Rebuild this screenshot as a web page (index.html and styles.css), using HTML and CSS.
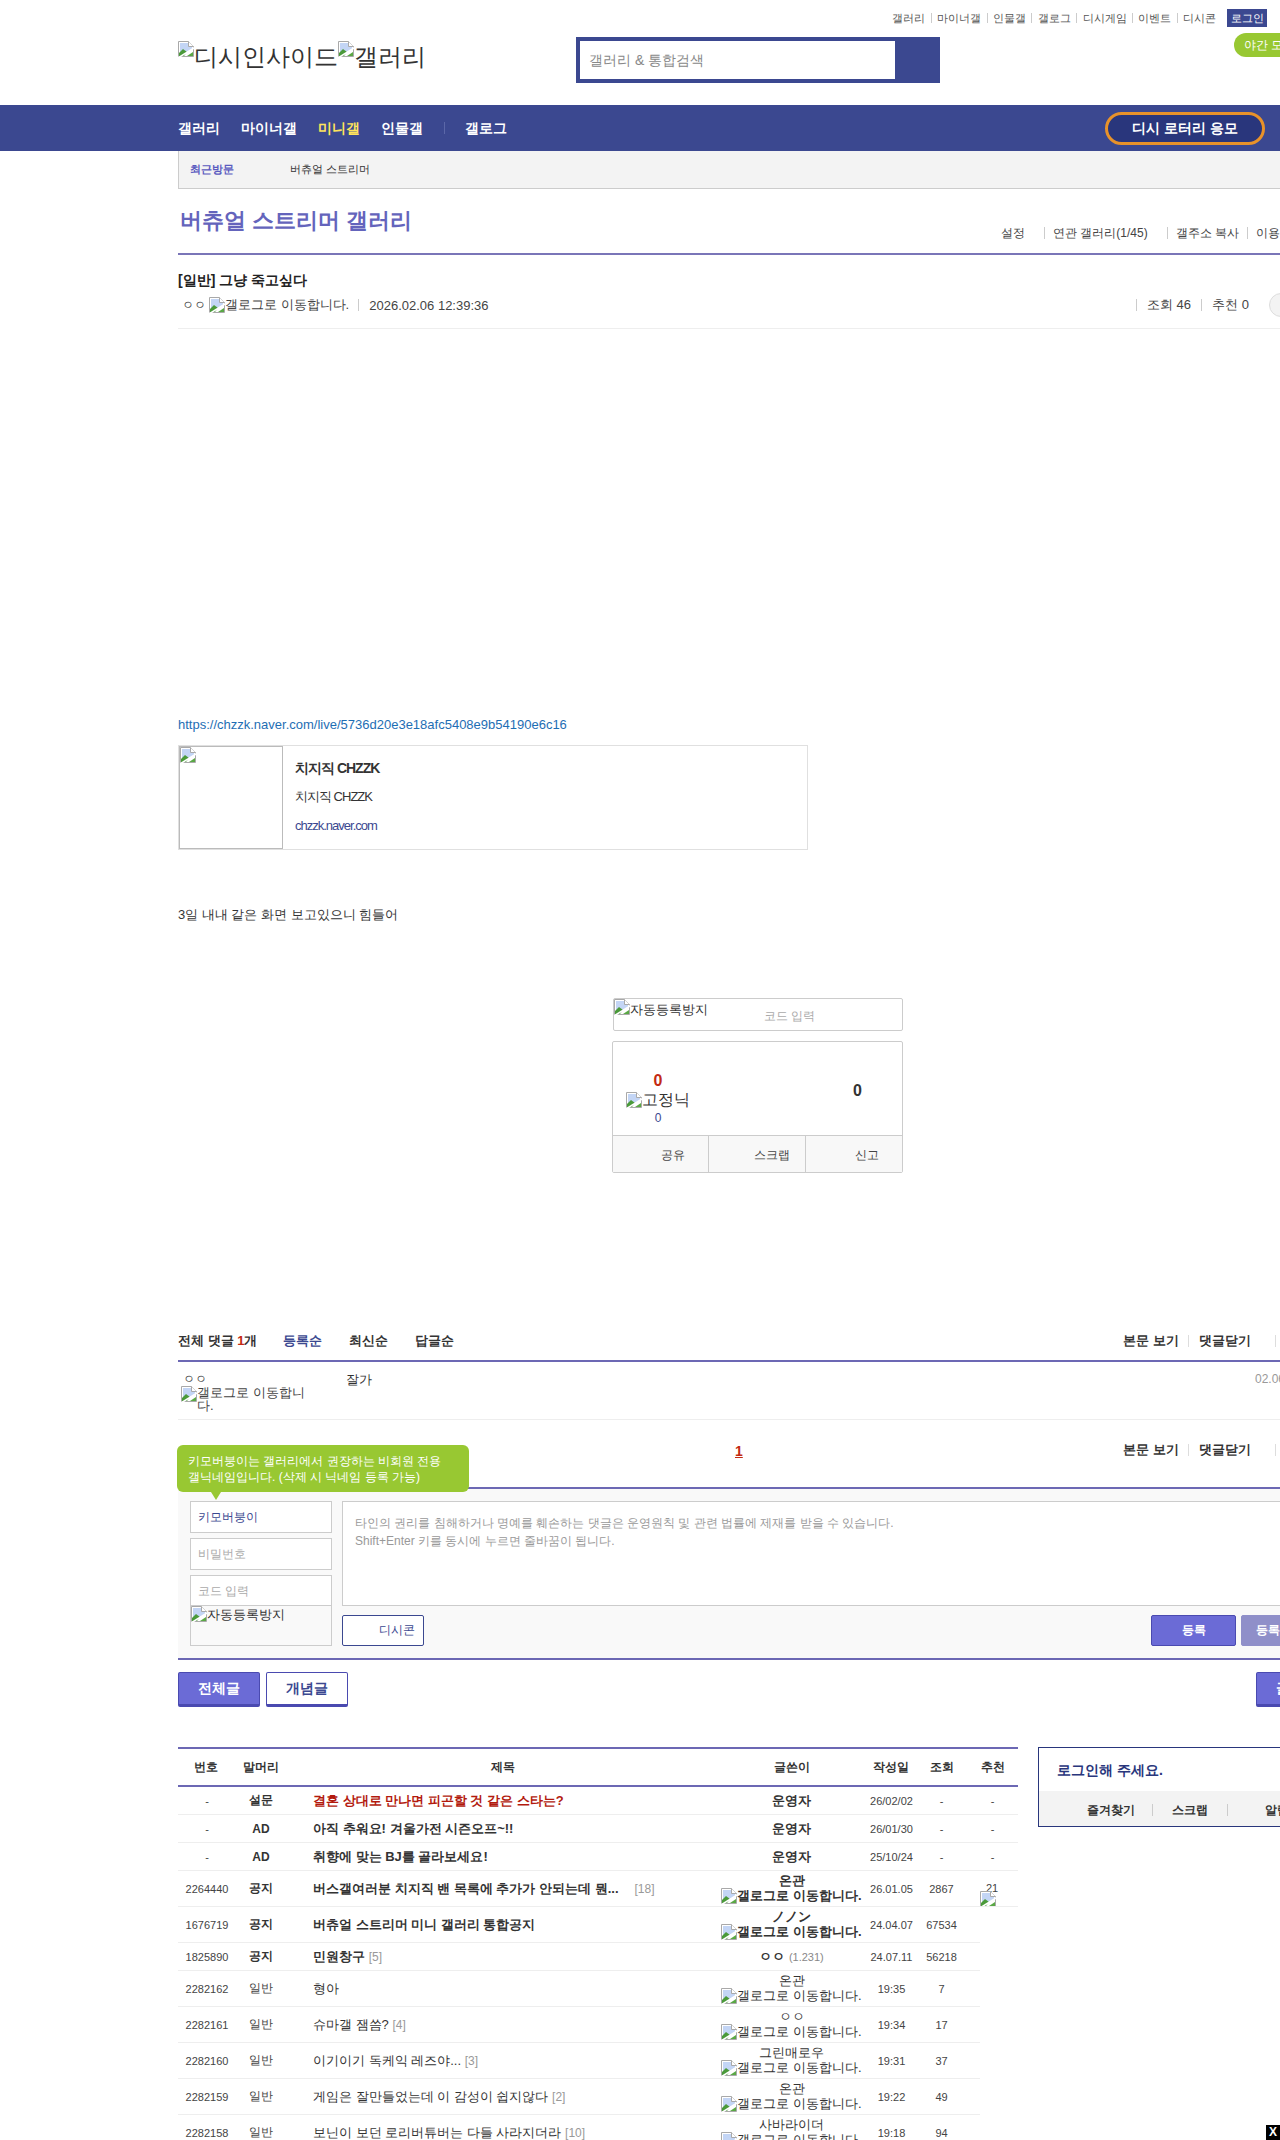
FILE: index.html
```html
<!DOCTYPE html>
<html lang="ko">
<head>
<meta charset="utf-8">
<title>버츄얼 스트리머 갤러리</title>
<link rel="stylesheet" href="styles.css">
</head>
<body>
<svg class="defs" width="0" height="0" aria-hidden="true">
  <symbol id="broken" viewBox="0 0 16 16">
    <path d="M.5.5h10l5 5v10H.5z" fill="#fff" stroke="#a9a9a9"/>
    <path d="M2 2h8l4 4v3L2 13z" fill="#c3d5f5"/>
    <path d="M10.5.5v5h5" fill="#fff" stroke="#a9a9a9"/>
    <path d="M1 15v-3l4-4 4 3-3 4z" fill="#4a9a3a"/>
    <path d="M9 15l6-4v4z" fill="#5aa845"/>
    <path d="M0 16L16 6v2L3 16z" fill="#fff"/>
  </symbol>
</svg>
<div class="page">
  <div class="topbar">
    <div class="toplinks">
      <a>갤러리</a><a>마이너갤</a><a>인물갤</a><a>갤로그</a><a>디시게임</a><a>이벤트</a><a>디시콘</a>
    </div>
    <span class="login">로그인</span>
  </div>
  <div class="header">
    <div class="logo"><svg class="bi"><use href="#broken"/></svg>디시인사이드<svg class="bi"><use href="#broken"/></svg>갤러리</div>
    <div class="search"><div class="search-input">갤러리 &amp; 통합검색</div></div>
    <div class="night">야간 모드</div>
  </div>
</div>
<nav class="gnb">
  <div class="page gnb-in">
    <a>갤러리</a><a>마이너갤</a><a class="on">미니갤</a><a>인물갤</a><i class="gnb-sep"></i><a>갤로그</a>
    <span class="lotto">디시 로터리 응모</span>
  </div>
</nav>
<div class="page">
  <div class="recent"><b>최근방문</b><span>버츄얼 스트리머</span></div>
  <div class="gall-head">
    <h2>버츄얼 스트리머 갤러리</h2>
    <div class="gall-links"><a class="l1">설정</a><i class="vs"></i><a class="l2">연관 갤러리(1/45)</a><i class="vs"></i><a class="l3">갤주소 복사</a><i class="vs"></i><a class="l4">이용 안내</a></div>
  </div>

  <div class="post-head">
    <h3>[일반] 그냥 죽고싶다</h3>
    <div class="post-meta">
      <span class="nick">ㅇㅇ</span><svg class="bi"><use href="#broken"/></svg><span class="alt">갤로그로 이동합니다.</span><i class="vs"></i><span class="date">2026.02.06 12:39:36</span>
      <div class="post-count"><i class="vs"></i><span class="pc1">조회 46</span><i class="vs"></i><span class="pc2">추천 0</span><span class="roundbtn"></span></div>
    </div>
  </div>

  <div class="post-body">
    <a class="post-link">https://chzzk.naver.com/live/5736d20e3e18afc5408e9b54190e6c16</a>
    <div class="og">
      <div class="og-img"><svg class="bi"><use href="#broken"/></svg></div>
      <div class="og-txt">
        <b>치지직 CHZZK</b>
        <span>치지직 CHZZK</span>
        <a>chzzk.naver.com</a>
      </div>
    </div>
    <p class="post-text">3일 내내 같은 화면 보고있으니 힘들어</p>
    <div class="captcha"><svg class="bi"><use href="#broken"/></svg><span class="cap-alt">자동등록방지</span><span class="cap-ph">코드 입력</span></div>
    <div class="rec">
      <div class="rec-top">
        <div class="rec-up"><b>0</b><div class="fix"><svg class="bi"><use href="#broken"/></svg>고정닉</div><em>0</em></div>
        <div class="rec-down">0</div>
      </div>
      <div class="rec-bot"><span class="rb1">공유</span><span class="rb2">스크랩</span><span class="rb3">신고</span></div>
    </div>
  </div>

  <div class="cmt-head">
    <div class="cmt-sort"><b>전체 댓글 <em>1</em>개</b><a class="on">등록순</a><a>최신순</a><a>답글순</a></div>
    <div class="cmt-opts"><a>본문 보기</a><i class="vs"></i><a>댓글닫기</a><i class="vs far"></i><a class="refresh">새로고침</a></div>
  </div>
  <div class="cmt-row">
    <div class="cmt-who"><span class="nick">ㅇㅇ</span><div class="cmt-alt"><svg class="bi"><use href="#broken"/></svg><span>갤로그로 이동합니다.</span></div></div>
    <div class="cmt-txt">잘가</div>
    <div class="cmt-date">02.06 12:45:01</div>
  </div>
  <div class="cmt-foot">
    <a class="pg">1</a>
    <div class="cmt-opts"><a>본문 보기</a><i class="vs"></i><a>댓글닫기</a><i class="vs far"></i><a class="refresh">새로고침</a></div>
    <div class="tip">키모버붕이는 갤러리에서 권장하는 비회원 전용<br>갤닉네임입니다. (삭제 시 닉네임 등록 가능)</div>
  </div>
  <div class="form">
    <div class="form-left">
      <div class="inp dark">키모버붕이</div>
      <div class="inp">비밀번호</div>
      <div class="inp-cap"><div class="inp-cap-ph">코드 입력</div><div class="inp-cap-img"><svg class="bi"><use href="#broken"/></svg>자동등록방지</div></div>
    </div>
    <div class="form-right">
      <div class="ta">타인의 권리를 침해하거나 명예를 훼손하는 댓글은 운영원칙 및 관련 법률에 제재를 받을 수 있습니다.<br>Shift+Enter 키를 동시에 누르면 줄바꿈이 됩니다.</div>
      <div class="form-btns"><span class="dccon">디시콘</span><span class="submit">등록</span><span class="submit alt2">등록+추천</span></div>
    </div>
  </div>
  <div class="tabs"><a class="tab on">전체글</a><a class="tab">개념글</a><a class="tab on write">글쓰기</a></div>

  <div class="list-wrap">
    <table class="list">
      <colgroup><col class="c1"><col class="c2"><col class="c3"><col class="c4"><col class="c5"><col class="c6"><col class="c7"></colgroup>
      <thead><tr><th>번호</th><th>말머리</th><th>제목</th><th>글쓴이</th><th>작성일</th><th class="pr">조회</th><th class="pr">추천</th></tr></thead>
      <tbody>
        <tr class="strong"><td class="num">-</td><td>설문</td><td class="t red">결혼 상대로 만나면 피곤할 것 같은 스타는?</td><td class="w">운영자</td><td class="d">26/02/02</td><td class="pr n">-</td><td class="pr n">-</td></tr>
        <tr class="strong"><td class="num">-</td><td>AD</td><td class="t">아직 추워요! 겨울가전 시즌오프~!!</td><td class="w">운영자</td><td class="d">26/01/30</td><td class="pr n">-</td><td class="pr n">-</td></tr>
        <tr class="strong"><td class="num">-</td><td>AD</td><td class="t">취향에 맞는 BJ를 골라보세요!</td><td class="w">운영자</td><td class="d">25/10/24</td><td class="pr n">-</td><td class="pr n">-</td></tr>
        <tr class="strong tall"><td class="num">2264440</td><td>공지</td><td class="t"><span class="cut">버스갤여러분 치지직 밴 목록에 추가가 안되는데 뭔...</span><span class="rp far">[18]</span></td><td class="w"><div>온관</div><div class="walt"><svg class="bi"><use href="#broken"/></svg>갤로그로 이동합니다.</div></td><td class="d">26.01.05</td><td class="pr n">2867</td><td class="pr n rcell"><span class="r21">21</span><svg class="bi r-ico"><use href="#broken"/></svg></td></tr>
        <tr class="strong tall"><td class="num">1676719</td><td>공지</td><td class="t">버츄얼 스트리머 미니 갤러리 통합공지</td><td class="w"><div>ノノン</div><div class="walt"><svg class="bi"><use href="#broken"/></svg>갤로그로 이동합니다.</div></td><td class="d">24.04.07</td><td class="pr n">67534</td></tr>
        <tr class="strong"><td class="num">1825890</td><td>공지</td><td class="t">민원창구 <span class="rp">[5]</span></td><td class="w">ㅇㅇ <span class="uid">(1.231)</span></td><td class="d">24.07.11</td><td class="pr n">56218</td></tr>
        <tr class="tall"><td class="num">2282162</td><td>일반</td><td class="t">형아</td><td class="w"><div>온관</div><div class="walt"><svg class="bi"><use href="#broken"/></svg>갤로그로 이동합니다.</div></td><td class="d">19:35</td><td class="pr n">7</td></tr>
        <tr class="tall"><td class="num">2282161</td><td>일반</td><td class="t">슈마갤 잼씀? <span class="rp">[4]</span></td><td class="w"><div>ㅇㅇ</div><div class="walt"><svg class="bi"><use href="#broken"/></svg>갤로그로 이동합니다.</div></td><td class="d">19:34</td><td class="pr n">17</td></tr>
        <tr class="tall"><td class="num">2282160</td><td>일반</td><td class="t">이기이기 독케익 레즈야... <span class="rp">[3]</span></td><td class="w"><div>그린매로우</div><div class="walt"><svg class="bi"><use href="#broken"/></svg>갤로그로 이동합니다.</div></td><td class="d">19:31</td><td class="pr n">37</td></tr>
        <tr class="tall"><td class="num">2282159</td><td>일반</td><td class="t">게임은 잘만들었는데 이 감성이 쉽지않다 <span class="rp">[2]</span></td><td class="w"><div>온관</div><div class="walt"><svg class="bi"><use href="#broken"/></svg>갤로그로 이동합니다.</div></td><td class="d">19:22</td><td class="pr n">49</td></tr>
        <tr class="tall"><td class="num">2282158</td><td>일반</td><td class="t">보닌이 보던 로리버튜버는 다들 사라지더라 <span class="rp">[10]</span></td><td class="w"><div>사바라이더</div><div class="walt"><svg class="bi"><use href="#broken"/></svg>갤로그로 이동합니다.</div></td><td class="d">19:18</td><td class="pr n">94</td></tr>
      </tbody>
    </table>
    <aside class="side">
      <div class="side-top">로그인해 주세요.</div>
      <div class="side-bot"><a class="s1">즐겨찾기</a><i class="vs"></i><a class="s2">스크랩</a><i class="vs"></i><a class="s3">알림</a></div>
    </aside>
  </div>
</div>
<span class="close-x">X</span>
</body>
</html>
```

FILE: styles.css
```css
* { box-sizing: border-box; }
html, body { margin: 0; padding: 0; height: 2140px; overflow: hidden; background: #fff; }
body { font-family: "Liberation Sans", sans-serif; font-size: 12px; color: #333; width: 1280px; position: relative; }
a { color: inherit; text-decoration: none; }
i, em { font-style: normal; }
.defs { position: absolute; }
.bi { width: 16px; height: 16px; flex: none; vertical-align: baseline; }
.page { width: 1160px; margin-left: 178px; }

.topbar { height: 37px; display: flex; align-items: flex-start; padding: 9px 0 0 709px; }
.toplinks { display: flex; align-items: center; height: 18px; font-size: 11px; color: #555; }
.toplinks a { padding: 0 5.4px; position: relative; }
.toplinks a + a { border-left: 1px solid #ccc; line-height: 10px; }
.login { margin-left: 6px; width: 40px; height: 18px; background: #3b4890; color: #fff; font-size: 11px; line-height: 18px; text-align: center; }

.header { height: 68px; display: flex; align-items: flex-start; }
.logo { width: 398px; font-size: 24px; line-height: 28px; color: #333; padding-top: 4px; white-space: nowrap; }
.logo .bi { vertical-align: 8px; }
.search { width: 364px; height: 46px; background: #3b4890; padding: 4px 45px 4px 4px; }
.search-input { height: 38px; background: #fff; color: #888; font-size: 14px; line-height: 38px; padding-left: 9px; }
.night { margin-left: 294px; width: 60px; height: 24px; margin-top: -4px; background: #98c832; color: #fff; border-radius: 12px 0 0 12px; font-size: 12px; line-height: 24px; padding-left: 10px; white-space: nowrap; overflow: visible; }

.gnb { height: 46px; background: #3b4890; }
.gnb-in { display: flex; align-items: center; height: 46px; color: #fff; font-size: 14px; font-weight: bold; }
.gnb-in a { margin-right: 21px; padding-top: 2px; }
.gnb-in a.on { color: #ffe45c; }
.gnb-sep { width: 1px; height: 12px; background: #5b67a8; margin: 0 20px 0 0; }
.lotto { margin-left: auto; margin-right: 73px; width: 160px; height: 33px; border: 3px solid #e8922a; border-radius: 17px; background: #29367c; text-align: center; line-height: 27px; }

.recent { height: 38px; background: #f3f3f3; border-left: 1px solid #ccc; border-bottom: 1px solid #ccc; display: flex; align-items: center; font-size: 11px; padding-left: 11px; }
.recent b { width: 100px; color: #5b5bc0; }
.gall-head { height: 66px; border-bottom: 2px solid #7a75b8; display: flex; position: relative; }
.gall-head h2 { margin: 16px 0 0 2px; font-size: 22px; line-height: 32px; font-weight: bold; color: #6464bc; }
.gall-links { position: absolute; left: 823px; top: 36px; display: flex; align-items: center; font-size: 12px; line-height: 16px; white-space: nowrap; color: #444; }
.gall-links .vs { margin: 0 8px; }
.gall-links .l1 { margin-right: 11px; }
.gall-links .l2 { margin-right: 11px; }

.post-head { height: 74px; border-bottom: 1px solid #eee; padding-top: 17px; position: relative; }
.post-head h3 { margin: 0; font-size: 14px; line-height: 16px; font-weight: bold; color: #222; }
.post-meta { display: flex; align-items: center; margin-top: 8px; height: 18px; font-size: 13px; color: #444; padding-left: 4px; }
.post-meta .nick { font-size: 12px; margin-right: 3px; }
.vs { display: inline-block; flex: none; width: 1px; height: 12px; background: #ccc; }
.post-meta .alt { margin-right: 9px; }
.post-meta .date { margin-left: 10px; }
.post-count { margin-left: auto; width: 202px; display: flex; align-items: center; flex: none; }
.post-count span { white-space: nowrap; }
.post-count .pc1 { margin: 0 10px 0 10px; }
.post-count .pc2 { margin: 0 20px 0 10px; }
.post-count .roundbtn { width: 68px; height: 24px; border: 1px solid #ddd; background: #f3f3f3; border-radius: 12px; margin: 0; flex: none; }

.post-body { height: 1004px; position: relative; padding-top: 388px; }
.post-link { display: block; font-size: 13px; line-height: 16px; color: #1e6eb4; }
.og { width: 630px; height: 105px; margin-top: 12px; border: 1px solid #e0e0e0; display: flex; }
.og-img { width: 104px; height: 103px; border: 1px solid #bbb; line-height: 0; }
.og-txt { display: flex; flex-direction: column; padding: 14px 0 0 12px; color: #333; letter-spacing: -1px; }
.og-txt b { font-size: 14px; line-height: 16px; }
.og-txt span { font-size: 13px; line-height: 16px; margin-top: 13px; }
.og-txt a { font-size: 13px; line-height: 16px; margin-top: 13px; color: #3b4890; }
.post-text { margin: 56px 0 0; font-size: 13px; line-height: 18px; color: #333; }
.captcha { position: absolute; left: 435px; top: 669px; width: 290px; height: 33px; border: 1px solid #ccc; border-radius: 2px; font-size: 13px; display: flex; }
.cap-alt { line-height: 22px; height: 22px; }
.cap-ph { position: absolute; left: 150px; top: 10px; font-size: 12px; line-height: 14px; color: #aaa; }
.rec { position: absolute; left: 434px; top: 712px; width: 291px; height: 132px; border: 1px solid #ccc; border-radius: 2px; }
.rec-top { height: 93px; position: relative; }
.rec-up { position: absolute; left: 13px; top: 30px; width: 64px; text-align: center; }
.rec-up b { display: block; font-size: 16px; line-height: 18px; color: #c32a12; }
.fix { font-size: 16px; line-height: 20px; display: flex; align-items: center; white-space: nowrap; }
.rec-up em { display: block; font-size: 12px; line-height: 14px; color: #3b4890; margin-top: 1px; }
.rec-down { position: absolute; left: 240px; top: 39px; font-size: 16px; font-weight: bold; line-height: 20px; color: #333; }
.rec-bot { height: 37px; background: #f8f8f8; border-top: 1px solid #ccc; display: flex; font-size: 12px; line-height: 38px; color: #444; }
.rec-bot span { display: block; text-align: right; }
.rb1 { width: 96px; padding-right: 23px; border-right: 1px solid #ccc; }
.rb2 { width: 97px; padding-right: 15px; border-right: 1px solid #ccc; }
.rb3 { width: 96px; padding-right: 23px; }

.cmt-head { height: 29px; border-bottom: 2px solid #6c68b4; position: relative; font-size: 13px; color: #333; padding-top: 0; }
.cmt-sort { display: flex; line-height: 16px; font-weight: bold; }
.cmt-sort b { width: 105px; }
.cmt-sort b em { color: #c32a12; }
.cmt-sort a { width: 66px; }
.cmt-sort a.on { color: #3b4890; }
.cmt-opts { position: absolute; left: 945px; top: 0; display: flex; align-items: center; font-weight: bold; font-size: 13px; line-height: 16px; white-space: nowrap; color: #333; }
.cmt-opts .vs { margin: 0 10px 0 9px; background: #ddd; }
.cmt-opts .far { margin: 0 21px 0 24px; }

.cmt-row { height: 58px; border-bottom: 1px solid #eee; display: flex; position: relative; padding-top: 10px; }
.cmt-who { width: 168px; padding-left: 3px; color: #444; font-size: 13px; flex: none; }
.cmt-who .nick { display: block; font-size: 12px; line-height: 14px; padding-left: 2px; }
.cmt-alt { display: flex; line-height: 13px; width: 125px; font-size: 13px; margin-top: 0; }
.cmt-txt { font-size: 13px; line-height: 16px; color: #333; }
.cmt-date { position: absolute; left: 1077px; top: 10px; font-size: 12px; line-height: 14px; color: #999; white-space: nowrap; }

.cmt-foot { height: 69px; border-bottom: 2px solid #6c68b4; position: relative; }
.cmt-foot .cmt-opts { top: 22px; }
.pg { position: absolute; left: 557px; top: 23px; font-size: 14px; line-height: 16px; font-weight: bold; color: #c32a12; text-decoration: underline; }
.tip { position: absolute; left: -1px; top: 25px; width: 292px; height: 47px; background: #98c832; color: #fff; border-radius: 6px; font-size: 12px; line-height: 16px; padding: 8px 0 0 11px; white-space: nowrap; z-index: 2; }
.tip::after { content: ""; position: absolute; left: 34px; top: 47px; border: 5px solid transparent; border-top: 8px solid #98c832; border-bottom: 0; }

.form { height: 171px; background: #f9f9f9; border-bottom: 2px solid #6c68b4; display: flex; padding: 12px 0 0 12px; }
.form-left { width: 152px; display: flex; flex-direction: column; gap: 5px; }
.inp { width: 142px; height: 32px; border: 1px solid #ccc; background: #fff; color: #aaa; font-size: 12px; line-height: 30px; padding-left: 7px; }
.inp.dark { color: #3b4890; }
.inp-cap { width: 142px; height: 71px; border: 1px solid #ccc; }
.inp-cap-ph { height: 30px; background: #fff; color: #aaa; line-height: 30px; padding-left: 7px; border-bottom: 1px solid #ccc; }
.inp-cap-img { font-size: 13px; line-height: 18px; color: #333; display: flex; white-space: nowrap; }
.form-right { flex: 1; }
.ta { height: 105px; border: 1px solid #ccc; background: #fff; color: #999; font-size: 12px; line-height: 18px; padding: 12px 0 0 12px; }
.form-btns { display: flex; margin-top: 9px; height: 31px; }
.dccon { width: 82px; height: 31px; border: 1px solid #3b4890; border-radius: 2px; background: #fff; color: #3b4890; line-height: 29px; padding-left: 36px; }
.submit { margin-left: 727px; width: 85px; height: 31px; background: #6b6bd6; border: 1px solid #4a4ab0; border-radius: 2px; color: #fff; font-weight: bold; text-align: center; line-height: 29px; }
.submit.alt2 { margin-left: 5px; background: #8f8fc9; border-color: #8f8fc9; width: 85px; }

.tabs { display: flex; gap: 6px; margin-top: 12px; position: relative; height: 35px; font-size: 14px; font-weight: bold; }
.tab { width: 82px; height: 35px; background: #fff; border: 1px solid #4a4ab0; border-bottom-width: 3px; border-radius: 2px; color: #3b4890; text-align: center; line-height: 31px; }
.tab.on { background: #6b6bd6; color: #fff; }
.tab.write { position: absolute; left: 1078px; }

.list-wrap { display: flex; margin-top: 40px; align-items: flex-start; }
.list { width: 840px; table-layout: fixed; border-collapse: separate; border-spacing: 0; border-top: 2px solid #6c68b4; }
.c1 { width: 56px; } .c2 { width: 54px; } .c3 { width: 430px; } .c4 { width: 147px; } .c5 { width: 51px; } .c6 { width: 64px; } .c7 { width: 38px; }
.list th { height: 38px; border-bottom: 2px solid #6c68b4; font-size: 12px; font-weight: bold; color: #333; padding: 0; }
.list th.pr, .list td.pr { padding-right: 13px; }
.list td { height: 28px; border-bottom: 1px solid #eee; text-align: center; padding: 0; font-size: 12px; color: #444; white-space: nowrap; }
.list tr.tall td { height: 36px; }
.list td.num { font-size: 11px; color: #444; padding-left: 2px; }
.list td.t { text-align: left; padding-left: 25px; font-size: 13px; color: #333; }
.list td.d, .list td.n { font-size: 11px; color: #444; }
.list td.d { padding-left: 2px; }
.list td.w { font-size: 13px; line-height: 15px; color: #333; overflow: visible; }
.walt { display: flex; align-items: center; justify-content: center; line-height: 16px; }
.rp { color: #999; font-size: 12px; font-weight: normal; }
.rp.far { margin-left: 16px; }
.uid { color: #888; font-size: 11px; font-weight: normal; }
.strong td { font-weight: bold; color: #333 !important; }
.strong td.num, .strong td.d, .strong td.n { font-weight: normal; color: #444 !important; }
.list td.red { color: #b31a0e !important; }
.rcell { position: relative; vertical-align: top; line-height: 0; text-align: left; overflow: hidden; }
.r21 { position: absolute; left: 6px; top: 11px; line-height: 12px; }
.r-ico { position: absolute; left: 0; top: 20px; }

.side { margin-left: 20px; width: 300px; height: 80px; border: 1px solid #29367c; flex: none; background: #fff; }
.side-top { height: 43px; line-height: 44px; padding-left: 18px; font-size: 14px; font-weight: bold; color: #29367c; }
.side-bot { height: 35px; background: #f3f3f3; font-size: 12px; font-weight: bold; color: #333; line-height: 36px; display: flex; align-items: center; padding-top: 2px; }
.s1 { margin-left: 48px; margin-right: 17px; }
.s2 { margin: 0 19px; }
.s3 { margin-left: 37px; }

.close-x { position: absolute; left: 1266px; top: 2125px; width: 14px; height: 15px; background: #000; color: #fff; font-weight: bold; font-size: 12px; line-height: 15px; text-align: center; }
```
